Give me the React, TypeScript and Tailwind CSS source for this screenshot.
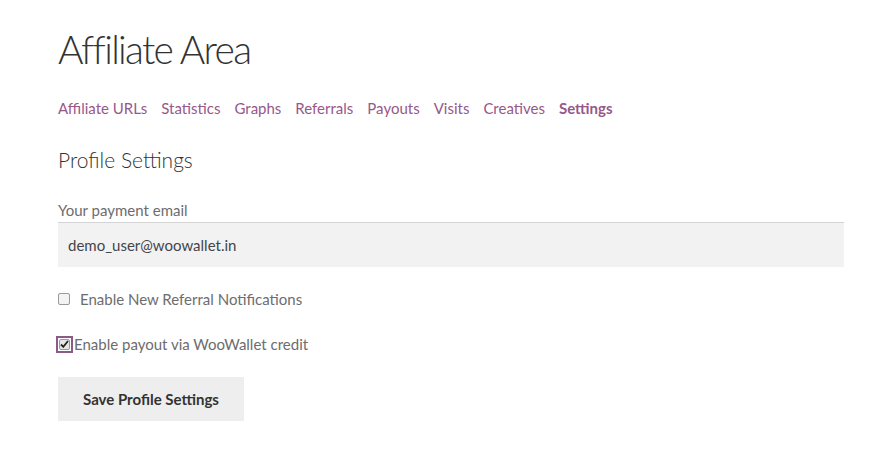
import React from "react";

export default function App() {
  const links = ["Affiliate URLs", "Statistics", "Graphs", "Referrals", "Payouts", "Visits", "Creatives"];
  return (
    <div className="w-[885px] h-[450px] bg-white pl-[58px] pr-[41px] pt-[24px] font-['Lato','Liberation_Sans',sans-serif]">
      <h1 className="text-[39px] leading-[50px] font-light text-[#333333] tracking-[-1.7px]">Affiliate Area</h1>
      <nav className="mt-[22px] flex gap-[14px] text-[15px] leading-[24px] text-[#96588a]">
        {links.map((l) => (
          <span key={l}>{l}</span>
        ))}
        <span className="font-bold">Settings</span>
      </nav>
      <h2 className="mt-[25px] text-[21px] leading-[30px] font-light text-[#333333]">Profile Settings</h2>
      <div className="mt-[23px] text-[15px] leading-[24px] text-[#6d6d6d]">Your payment email</div>
      <div className="h-[45px] bg-[#f2f2f2] border-t border-[#d4d4d4] flex items-center pl-[10px] text-[15px] text-[#43454b]">
        demo_user@woowallet.in
      </div>
      <div className="mt-[20px] flex items-center h-[24px] text-[15px] text-[#6d6d6d]">
        <span className="w-[12px] h-[12px] rounded-[2px] border border-[#9a9a9a] bg-[#f3f3f3]"></span>
        <span className="ml-[10px]">Enable New Referral Notifications</span>
      </div>
      <div className="mt-[21px] flex items-center h-[24px] text-[15px] text-[#6d6d6d]">
        <span className="w-[17px] h-[17px] -ml-[2px] border-2 border-[#8b5a87] flex items-center justify-center">
          <span className="w-[11px] h-[11px] rounded-[2px] border border-[#9a9a9a] bg-[#e6e6e6] flex items-center justify-center text-[10px] leading-none text-[#222]">
            <svg width="9" height="8" viewBox="0 0 9 8"><path d="M1 4.5 L3.3 6.8 L8 1" stroke="#222" strokeWidth="1.8" fill="none" /></svg>
          </span>
        </span>
        <span className="ml-[1px]">Enable payout via WooWallet credit</span>
      </div>
      <button className="mt-[21px] w-[186px] h-[44px] bg-[#eeeeee] text-[#333333] font-bold text-[15px]">Save Profile Settings</button>
    </div>
  );
}
